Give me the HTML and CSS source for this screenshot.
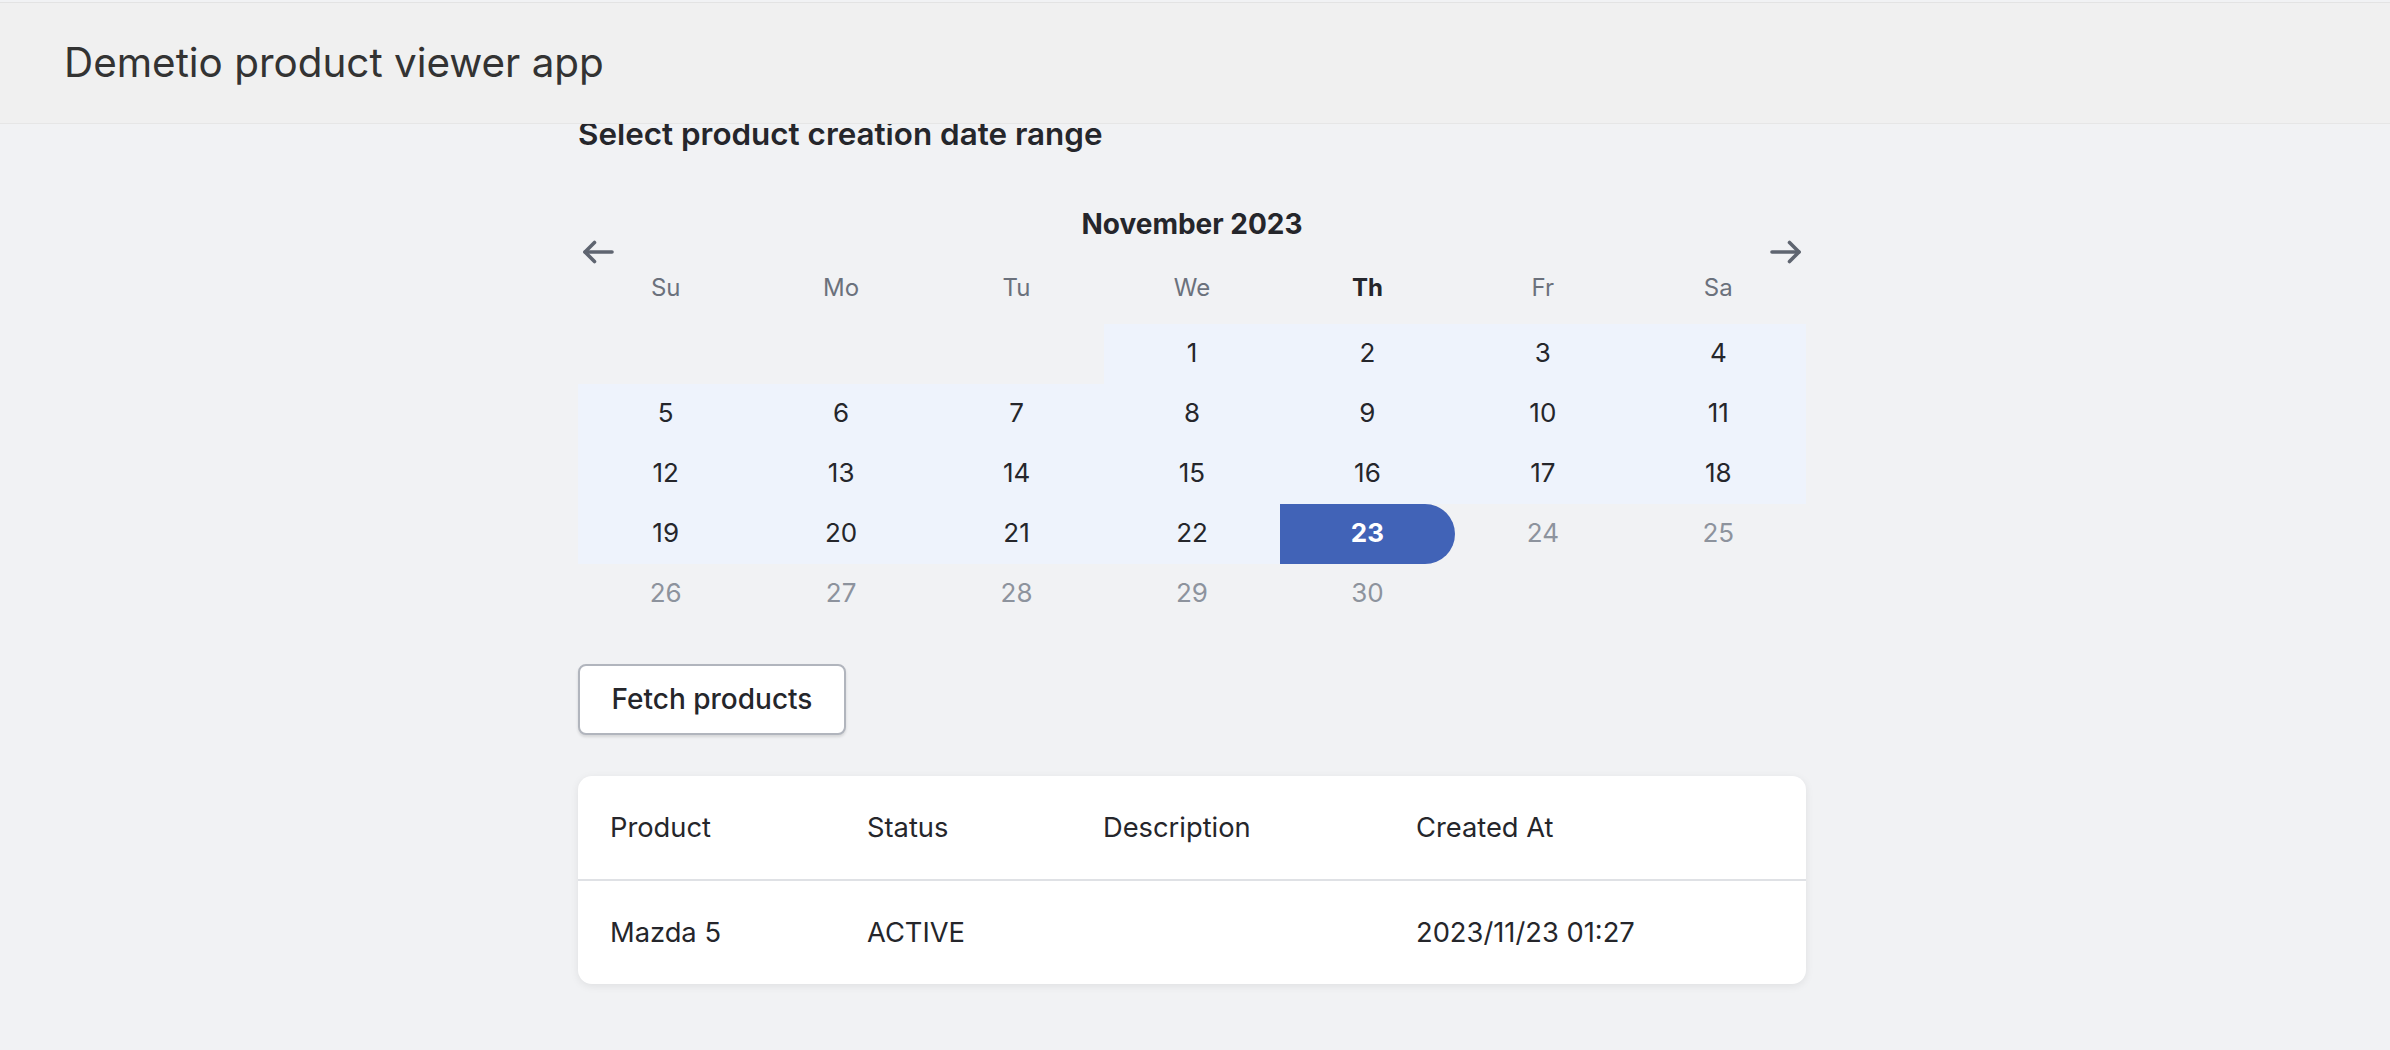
FILE: index.html
```html
<!DOCTYPE html>
<html lang="en">
<head>
<meta charset="utf-8">
<title>Demetio product viewer app</title>
<link rel="stylesheet" href="styles.css">
</head>
<body>
<header class="app-header">
  <h1 class="app-title">Demetio product viewer app</h1>
</header>
<main class="content">
  <h2 class="section-title">Select product creation date range</h2>
  <section class="calendar">
    <div class="cal-month">November 2023</div>
    <div class="cal-nav">
      <button class="nav-btn" aria-label="Previous month">
        <svg width="32" height="24" viewBox="0 0 32 24" fill="none" stroke="currentColor" stroke-width="3.6" stroke-linecap="round" stroke-linejoin="round"><path d="M3 12H30"/><path d="M12.5 2.5L3 12l9.5 9.5"/></svg>
      </button>
      <button class="nav-btn" aria-label="Next month">
        <svg width="32" height="24" viewBox="0 0 32 24" fill="none" stroke="currentColor" stroke-width="3.6" stroke-linecap="round" stroke-linejoin="round"><path d="M29 12H2"/><path d="M19.5 2.5L29 12l-9.5 9.5"/></svg>
      </button>
    </div>
    <div class="cal-weekdays">
      <span>Su</span><span>Mo</span><span>Tu</span><span>We</span><span class="today-wd">Th</span><span>Fr</span><span>Sa</span>
    </div>
    <div class="cal-grid">
      <span class="day empty"></span><span class="day empty"></span><span class="day empty"></span>
      <span class="day in-range">1</span><span class="day in-range">2</span><span class="day in-range">3</span><span class="day in-range">4</span>
      <span class="day in-range">5</span><span class="day in-range">6</span><span class="day in-range">7</span><span class="day in-range">8</span><span class="day in-range">9</span><span class="day in-range">10</span><span class="day in-range">11</span>
      <span class="day in-range">12</span><span class="day in-range">13</span><span class="day in-range">14</span><span class="day in-range">15</span><span class="day in-range">16</span><span class="day in-range">17</span><span class="day in-range">18</span>
      <span class="day in-range">19</span><span class="day in-range">20</span><span class="day in-range">21</span><span class="day in-range">22</span><span class="day selected">23</span><span class="day disabled">24</span><span class="day disabled">25</span>
      <span class="day disabled">26</span><span class="day disabled">27</span><span class="day disabled">28</span><span class="day disabled">29</span><span class="day disabled">30</span><span class="day empty"></span><span class="day empty"></span>
    </div>
  </section>
  <button class="fetch-btn">Fetch products</button>
  <div class="table-card">
    <table class="products">
      <thead>
        <tr><th class="col-product">Product</th><th class="col-status">Status</th><th class="col-desc">Description</th><th class="col-created">Created At</th></tr>
      </thead>
      <tbody>
        <tr><td>Mazda 5</td><td>ACTIVE</td><td></td><td>2023/11/23 01:27</td></tr>
      </tbody>
    </table>
  </div>
</main>
</body>
</html>
```
FILE: styles.css
```css
* { box-sizing: border-box; }

html, body {
  margin: 0;
  padding: 0;
}

body {
  background: #f1f2f4;
  font-family: Inter, "Noto Sans", "Liberation Sans", sans-serif;
  color: #25262b;
  padding-right: 6px;
}

.app-header {
  position: fixed;
  top: 2px;
  left: 0;
  right: 0;
  height: 122px;
  background: #f0f0f0;
  border-top: 1px solid #e3e3e3;
  border-bottom: 1px solid #e6e6e6;
  z-index: 10;
  display: flex;
  align-items: center;
  padding-left: 64px;
}

.app-title {
  margin: 0;
  font-size: 40.4px;
  font-weight: 400;
  color: #333333;
  line-height: 1;
  padding-top: 1px;
}

.content {
  width: 1228px;
  margin: 0 auto;
  padding-top: 117px;
  padding-bottom: 60px;
}

.section-title {
  margin: 0;
  font-size: 31.4px;
  line-height: 34px;
  font-weight: 600;
  color: #25262b;
}

.calendar {
  margin-top: 55.5px;
}

.cal-month {
  text-align: center;
  font-size: 28px;
  line-height: 34px;
  font-weight: 700;
  color: #25262b;
}

.cal-nav {
  display: flex;
  justify-content: space-between;
  height: 24px;
  margin-top: -1px;
  padding: 0 4px;
}

.nav-btn {
  border: 0;
  background: none;
  padding: 0;
  margin: 0;
  width: 32px;
  height: 24px;
  color: #5f6570;
  display: flex;
}

.cal-weekdays {
  display: grid;
  grid-template-columns: repeat(7, 1fr);
  margin-top: 6px;
  font-size: 24px;
  line-height: 36px;
  color: #6b717c;
  text-align: center;
}

.cal-weekdays .today-wd {
  font-weight: 700;
  color: #25262b;
}

.cal-grid {
  display: grid;
  grid-template-columns: repeat(7, 1fr);
  grid-auto-rows: 60px;
  margin-top: 18px;
}

.day {
  display: flex;
  align-items: center;
  justify-content: center;
  font-size: 26px;
  color: #25262b;
  padding-bottom: 2px;
}

.day.in-range {
  background: #eef3fc;
}

.day.selected {
  background: #4163b7;
  color: #ffffff;
  font-weight: 700;
  border-radius: 0 32px 32px 0;
}

.day.disabled {
  color: #8d939d;
}

.fetch-btn {
  display: block;
  margin-top: 40px;
  height: 71px;
  width: 268px;
  padding: 0;
  background: #ffffff;
  border: 2px solid #b1b5bd;
  border-radius: 8px;
  box-shadow: 0 2px 3px rgba(0, 0, 0, 0.12);
  font-family: inherit;
  font-size: 28px;
  font-weight: 500;
  color: #25262b;
}

.table-card {
  margin-top: 41px;
  background: #ffffff;
  border-radius: 14px;
  box-shadow: 0 2px 8px rgba(0, 0, 0, 0.08);
  overflow: hidden;
}

.products {
  width: 100%;
  border-collapse: collapse;
  table-layout: fixed;
  font-size: 27.3px;
  color: #25262b;
}

.products th,
.products td {
  text-align: left;
  font-weight: 400;
  padding: 0 0 0 32px;
  height: 104px;
}

.products thead th {
  border-bottom: 2px solid #dfe1e5;
}

.col-product { width: 257px; }
.col-status { width: 236px; }
.col-desc { width: 313px; }
.col-created { width: 422px; }
```
